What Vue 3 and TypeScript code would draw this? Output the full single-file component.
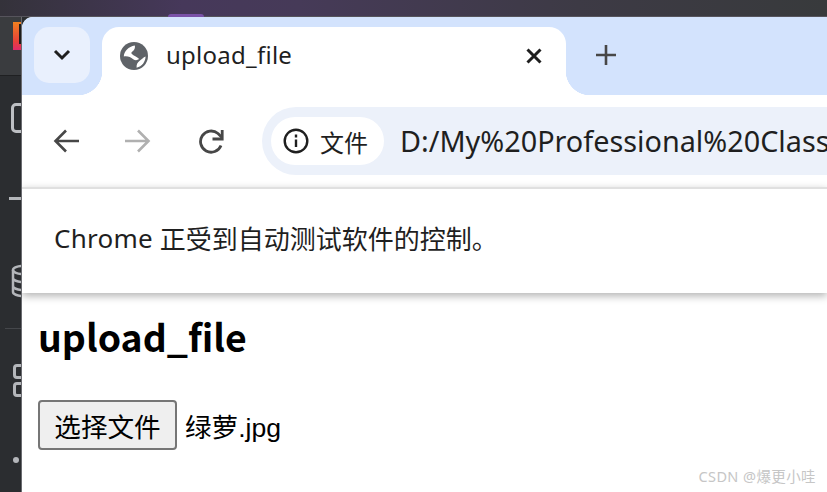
<script setup lang="ts">
const crumbs: string[] = ['upload_file']
</script>

<template>
  <div class="desktop">
    <div class="top-strip"><span class="glow"></span></div>
    <div class="workspace">
      <aside class="ide">
        <div class="ide-head"><span class="logo"></span></div>
        <div class="ide-rail">
          <span class="r folder"></span>
          <span class="r dash"></span>
          <svg class="r db" width="22" height="34" viewBox="0 0 22 34" fill="none" stroke="#b4b6ba" stroke-width="2.500"><ellipse cx="12" cy="6" rx="10" ry="4"/><path d="M2 6v22c0 2 4 4 10 4M2 14c0 2 4 4 10 4M2 22c0 2 4 4 10 4"/></svg>
          <span class="r sep"></span>
          <span class="r sq"></span>
          <span class="r sq second"></span>
          <span class="r dot"></span>
        </div>
      </aside>
      <main class="window">
        <div class="tabstrip">
          <button class="tabsearch">
            <svg width="18" height="12" viewBox="0 0 18 12" fill="none" stroke="#1f1f1f" stroke-width="3"><path d="M2 2l7 7 7-7"/></svg>
          </button>
          <div class="tab">
            <svg class="globe" width="28" height="28" viewBox="0 0 28 28"><circle cx="14" cy="14" r="14" fill="#5f6368"/><path d="M3.800 14.500C4 9.500 8.500 4.500 14.800 3.600c.6 2-.2 4.400-2 5.600-1.200.8-2 1.500-.9 2.700 1.700 1.800 5 2.400 7.300 5.100-2 1.500-4.200 1.500-6 .2-2.700-2-5.300-3.300-9.400-2.700zM25.600 14.500c-.2 5.500-3.600 9.800-9 11.300-.3-3.300.9-5.500 3.400-7.200 1.700-1.200 3.200-3.300 5.600-4.100z" fill="#fff"/></svg>
            <span class="tab-title">{{ crumbs[0] }}</span>
            <svg class="close" width="16" height="16" viewBox="0 0 16 16" stroke="#1f1f1f" stroke-width="3"><path d="M1.500 1.500l13 13M14.500 1.500l-13 13"/></svg>
          </div>
          <svg class="plus" width="20" height="20" viewBox="0 0 20 20" stroke="#474747" stroke-width="2.600"><path d="M10 0v20M0 10h20"/></svg>
        </div>
        <div class="toolbar">
          <svg class="navicon" width="26" height="24" viewBox="0 0 26 24" fill="none" stroke="#474747" stroke-width="2.600"><path d="M26 12H3M13 1.500L2.500 12 13 22.500"/></svg>
          <svg class="navicon fwd" width="26" height="24" viewBox="0 0 26 24" fill="none" stroke="#b0b0b0" stroke-width="2.600"><path d="M0 12h23M13 1.500L23.500 12 13 22.500"/></svg>
          <svg class="navicon reload" width="26" height="26" viewBox="0 0 26 26" fill="none" stroke="#474747" stroke-width="2.800"><path d="M23 17.500A10.600 10.600 0 1 1 20 5.500L24 9.500"/><path d="M24.200 2v9H14.500"/></svg>
          <div class="omnibox">
            <div class="chip">
              <svg width="26" height="26" viewBox="0 0 26 26" fill="none" stroke="#1f1f1f" stroke-width="2.400"><circle cx="13" cy="13" r="11.300"/><path d="M13 11.500v7.500M13 6.500v3"/></svg>
              <span class="chip-text">文件</span>
            </div>
            <span class="url">D:/My%20Professional%20Class</span>
          </div>
        </div>
        <div class="infobar"><span class="brand">Chrome</span>&nbsp;正受到自动测试软件的控制。</div>
        <div class="page">
          <h1 class="heading">upload_file</h1>
          <div class="file-row">
            <button class="file-btn">选择文件</button>
            <span class="file-name">绿萝.jpg</span>
          </div>
        </div>
      </main>
    </div>
    <span class="mark">CSDN @爆更小哇</span>
  </div>
</template>

<style>
html, body { margin: 0; padding: 0; overflow: hidden; background: #fff; }
</style>

<style scoped>
.desktop {
  width: 827px;
  height: 492px;
  position: relative;
  overflow: hidden;
  display: flex;
  flex-direction: column;
  background: #2b2d30;
  font-family: "Noto Sans", "Noto Sans CJK SC", sans-serif;
}
.top-strip {
  height: 17px;
  flex: none;
  position: relative;
  background: linear-gradient(90deg, #34323a 0%, #46385a 22%, #463a58 36%, #3d3a45 70%, #383a3c 100%);
  border-bottom: 1px solid #56545c;
  box-sizing: border-box;
}
.glow {
  position: absolute;
  left: 168px;
  top: 14px;
  width: 36px;
  height: 3px;
  border-radius: 6px 6px 0 0;
  background: #7a52a8;
}
.workspace { flex: 1; display: flex; min-height: 0; }
.ide {
  width: 21px;
  flex: none;
  display: flex;
  flex-direction: column;
  border-right: 1px solid #6a6b70;
  overflow: hidden;
}
.ide-head {
  height: 58px;
  flex: none;
  background: #3a3c3f;
  border-bottom: 1px solid #1f2022;
  position: relative;
}
.logo {
  position: absolute;
  left: 13px;
  top: 5px;
  width: 8px;
  height: 28px;
  background:
    linear-gradient(#1c1c1c, #1c1c1c) 6px 2px / 2px 20px no-repeat,
    linear-gradient(180deg, #f08020 0%, #e8403a 70%, #e02a6a 100%);
}
.ide-rail { flex: 1; position: relative; background: #2b2d30; }
.r { position: absolute; display: block; }
.folder { left: 11px; top: 27px; width: 14px; height: 30px; border: 3px solid #bdbfc3; border-radius: 5px; box-sizing: border-box; }
.dash { left: 9px; top: 121px; width: 12px; height: 3px; background: #b4b6ba; }
.db { left: 11px; top: 188px; }
.sep { left: 5px; top: 252px; width: 16px; height: 1px; background: #45474b; }
.sq { left: 13px; top: 288px; width: 12px; height: 15px; border: 3px solid #b4b6ba; border-radius: 4px; box-sizing: border-box; }
.second { top: 306px; }
.dot { left: 13px; top: 381px; width: 6px; height: 6px; border-radius: 50%; background: #b4b6ba; }
.window {
  flex: 1;
  min-width: 0;
  display: flex;
  flex-direction: column;
  background: #fff;
  border-radius: 11px 0 0 0;
  overflow: hidden;
}
.tabstrip {
  height: 78px;
  flex: none;
  background: #d3e3fd;
  display: flex;
  align-items: flex-start;
  position: relative;
}
.tabsearch {
  width: 56px;
  height: 56px;
  margin: 10px 12px 0 12px;
  border: 0;
  padding: 0;
  border-radius: 15px;
  background: #e9f0fd;
  display: flex;
  align-items: center;
  justify-content: center;
  flex: none;
  position: relative;
  z-index: 1;
}
.tab {
  width: 464px;
  height: 68px;
  margin-top: 10px;
  flex: none;
  background: #fff;
  border-radius: 17px 17px 0 0;
  display: flex;
  align-items: center;
  position: relative;
  padding-bottom: 10px;
  box-sizing: border-box;
}
.tab::before, .tab::after {
  content: "";
  position: absolute;
  bottom: 0;
  width: 24px;
  height: 24px;
}
.tab::before { left: -24px; background: radial-gradient(circle at 0 0, #d3e3fd 24px, #fff 24.500px); }
.tab::after { right: -24px; background: radial-gradient(circle at 100% 0, #d3e3fd 24px, #fff 24.500px); }
.globe { margin-left: 18px; flex: none; }
.tab-title {
  margin-left: 18px;
  margin-bottom: 4px;
  font-size: 24px;
  color: #1f1f1f;
  flex: 1;
  letter-spacing: .25px;
}
.close { margin-right: 24px; flex: none; }
.plus { margin: 28px 0 0 30px; flex: none; }
.toolbar {
  height: 92px;
  flex: none;
  background: #fff;
  display: flex;
  align-items: center;
  box-sizing: border-box;
  border-radius: 22px 0 0 0;
  position: relative;
  padding-left: 31px;
}
.navicon { flex: none; margin-right: 46px; }
.navicon.fwd { margin-right: 47px; }
.navicon.reload { margin-right: 38px; }
.omnibox {
  height: 68px;
  flex: none;
  width: 640px;
  border-radius: 34px 0 0 34px;
  background: #ecf1fa;
  display: flex;
  align-items: center;
  padding-left: 9px;
  box-sizing: border-box;
}
.chip {
  height: 48px;
  width: 113px;
  flex: none;
  background: #fff;
  border-radius: 24px;
  display: flex;
  align-items: center;
  padding-left: 12px;
  box-sizing: border-box;
}
.chip-text { margin-left: 11px; font-size: 24px; color: #1f1f1f; }
.url {
  margin-left: 16px;
  margin-bottom: 2px;
  font-size: 28.800px;
  color: #1f1f1f;
  white-space: nowrap;
}
.infobar {
  height: 106px;
  flex: none;
  box-sizing: border-box;
  border-top: 2px solid #e0e0e0;
  padding: 0 32px 7px;
  display: flex;
  align-items: center;
  font-size: 26px;
  color: #1f1f1f;
  background: #fff;
  box-shadow: 0 3px 8px rgba(0,0,0,.3);
  position: relative;
  z-index: 1;
}
.brand { letter-spacing: .25px; }
.page { flex: 1; padding: 0 16px; background: #fff; }
.heading {
  margin: 16px 0 0;
  font-family: "Noto Sans CJK SC", "Noto Sans", sans-serif;
  font-size: 37.400px;
  font-weight: 700;
  line-height: 54px;
  color: #000;
}
.file-row { margin-top: 37px; display: flex; align-items: center; }
.file-btn {
  width: 139px;
  height: 50px;
  padding: 0;
  border: 2px solid #767676;
  border-radius: 4px;
  background: #efefef;
  font-family: "Liberation Sans", "Noto Sans CJK SC", sans-serif;
  font-size: 26.600px;
  color: #000;
  flex: none;
}
.file-name {
  margin-left: 8px;
  font-family: "Liberation Sans", "Noto Sans CJK SC", sans-serif;
  font-size: 26.600px;
  color: #000;
}
.mark {
  position: absolute;
  right: 11px;
  bottom: 6px;
  font-size: 14.500px;
  letter-spacing: .4px;
  color: #c6c6c6;
  z-index: 2;
}
</style>
